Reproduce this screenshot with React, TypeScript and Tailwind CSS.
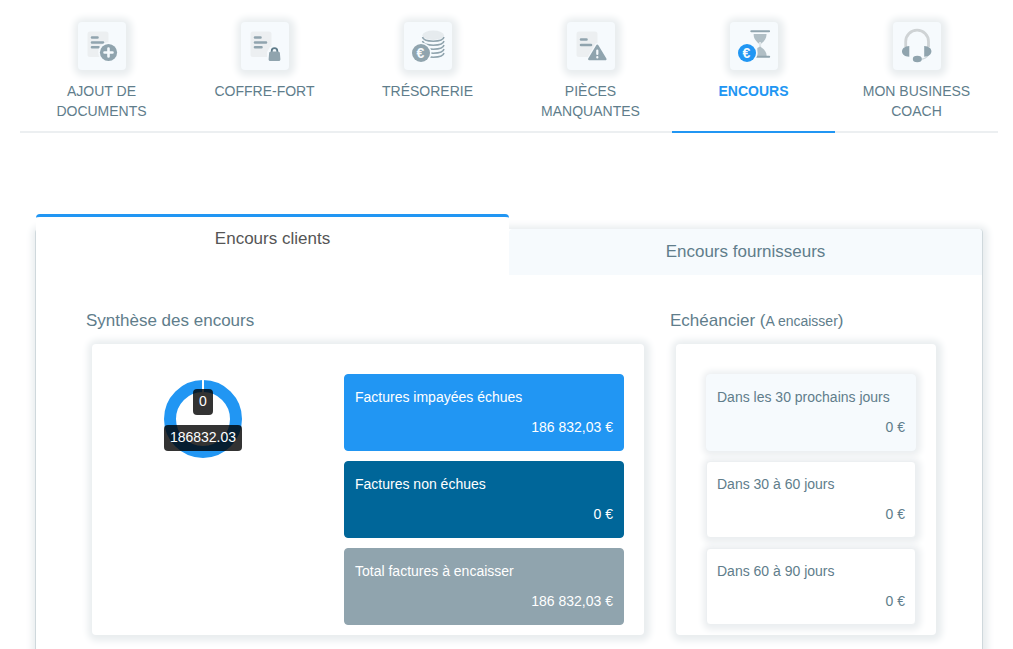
import { useState, type ReactNode } from 'react';
import clsx from 'clsx';

function DocumentLines({ short }: { short?: boolean }) {
  return (
    <>
      <rect x="9.5" y="9.5" width="21" height="25.5" rx="2.5" fill="#eceff1" />
      {short ? (
        <path d="M14 17.5h5.5M14 23h10" stroke="#90a4ae" strokeWidth="2.6" strokeLinecap="round" />
      ) : (
        <path d="M14 15.5h5.5M14 20.5h11M14 25.3h6.5" stroke="#90a4ae" strokeWidth="2.6" strokeLinecap="round" />
      )}
    </>
  );
}

function EuroCoin({ fill }: { fill: string }) {
  return (
    <>
      <circle cx="17" cy="31" r="10.5" fill="#f6fafd" />
      <circle cx="17" cy="31" r="9" fill={fill} />
      <text x="16.5" y="35.7" textAnchor="middle" fontSize="14" fontWeight="bold" fill="#f6fafd">€</text>
    </>
  );
}

const navItems: { label: string; icon: ReactNode }[] = [
  {
    label: 'AJOUT DE DOCUMENTS',
    icon: (
      <>
        <DocumentLines />
        <circle cx="30.5" cy="30.5" r="10.3" fill="#f6fafd" />
        <circle cx="30.5" cy="30.5" r="8.6" fill="#90a4ae" />
        <path d="M30.5 26.5v8M26.5 30.5h8" stroke="#f6fafd" strokeWidth="2.6" strokeLinecap="round" />
      </>
    ),
  },
  {
    label: 'COFFRE-FORT',
    icon: (
      <>
        <DocumentLines />
        <path d="M26 40.5v-10.5l3-5h9l3 5v10.5z" fill="#f6fafd" />
        <path d="M30.7 31v-2a2.8 2.8 0 0 1 5.6 0v2" fill="none" stroke="#607d8b" strokeWidth="1.8" />
        <path d="M30 29.5h7c1.2 0 1.8.8 1.9 1.8l.5 5.9c0 1.1-.6 1.8-1.7 1.8h-8.4c-1.1 0-1.7-.7-1.7-1.8l.5-5.9c.1-1 .7-1.8 1.900-1.800z" fill="#90a4ae" />
      </>
    ),
  },
  {
    label: 'TRÉSORERIE',
    icon: (
      <>
        <ellipse cx="29.2" cy="13.3" rx="10.8" ry="4.7" fill="#e6ebee" />
        <g fill="none" stroke="#90a4ae" strokeWidth="1.5">
          <path d="M18.5 15c1 5.5 20.5 5.5 21.5 0" />
          <path d="M18.5 19c1 5.5 20.5 5.5 21.5 0" />
          <path d="M18.5 23c1 5.5 20.5 5.5 21.5 0" />
          <path d="M18.5 27c1 5.5 20.5 5.5 21.5 0" />
          <path d="M18.5 31c1 5.5 20.5 5.5 21.5 0" />
        </g>
        <EuroCoin fill="#90a4ae" />
      </>
    ),
  },
  {
    label: 'PIÈCES MANQUANTES',
    icon: (
      <>
        <DocumentLines short />
        <path d="M30.3 23.5l8 14h-16z" fill="#f6fafd" stroke="#f6fafd" strokeWidth="5" strokeLinejoin="round" />
        <path d="M30.3 23.8l8 13.3h-16z" fill="#90a4ae" stroke="#90a4ae" strokeWidth="2.5" strokeLinejoin="round" />
        <path d="M30.3 28.5v3.5M30.3 35v.5" stroke="#f6fafd" strokeWidth="2.2" strokeLinecap="round" />
      </>
    ),
  },
  {
    label: 'ENCOURS',
    icon: (
      <>
        <path d="M23.7 12h12.8c.3 4.5-2.5 7-5 9.500h-2.800c-2.500-2.500-5.300-5-5-9.500z" fill="#b0bec5" />
        <path d="M30.1 20v5" stroke="#e0e6e9" strokeWidth="2" />
        <path d="M30.1 24.5c4 2.5 6.5 5.5 6.5 9.5h-9.300v-8z" fill="#b0bec5" />
        <path d="M21.3 9.2h17.8M26 34.7h13.2" stroke="#90a4ae" strokeWidth="2" strokeLinecap="round" />
        <EuroCoin fill="#2196f3" />
      </>
    ),
  },
  {
    label: 'MON BUSINESS COACH',
    icon: (
      <>
        <path d="M12.7 25v-5.5a11.3 11.3 0 0 1 22.8 0V25" fill="none" stroke="#cfd3d5" strokeWidth="2.8" />
        <path d="M35.5 33c-1.5 2.5-4 4-8 4.3" fill="none" stroke="#cfd8dc" strokeWidth="1.3" />
        <path d="M16.3 24v10.8c-9.7-.5-9.700-10.300 0-10.800zM31.200 24v10.800c9.700-.5 9.700-10.300 0-10.800z" fill="#90a4ae" />
        <ellipse cx="24.3" cy="37" rx="4.5" ry="3.2" fill="#90a4ae" />
      </>
    ),
  },
];

const totals = [
  { label: 'Factures impayées échues', amount: '186 832,03 €', color: 'border-[#2196f3] bg-[#2196f3] text-white' },
  { label: 'Factures non échues', amount: '0 €', color: 'border-[#006699] bg-[#006699] text-white' },
  { label: 'Total factures à encaisser', amount: '186 832,03 €', color: 'border-[#90a4ae] bg-[#90a4ae] text-white' },
];

const schedule = [
  { label: 'Dans les 30 prochains jours', amount: '0 €', color: 'border-[#f6fafd] bg-[#f6fafd]' },
  { label: 'Dans 30 à 60 jours', amount: '0 €', color: 'border-[#eceff1] bg-white' },
  { label: 'Dans 60 à 90 jours', amount: '0 €', color: 'border-[#eceff1] bg-white' },
];

const tabs = ['Encours clients', 'Encours fournisseurs'];

function AmountBox({ label, amount, className }: { label: string; amount: string; className?: string }) {
  return (
    <div className={clsx('rounded border px-[10px] pb-[13px] pt-3 text-sm', className)}>
      <p>{label}</p>
      <p className="mt-[10px] text-right">{amount}</p>
    </div>
  );
}

function Donut() {
  return (
    <div className="relative mx-auto mt-[6px] h-[78px] w-[78px]">
      <svg viewBox="0 0 78 78" className="h-full w-full">
        <circle cx="39" cy="39" r="33" fill="none" stroke="#2196f3" strokeWidth="12" />
        <path d="M39 0v13" stroke="#fff" strokeWidth="2" />
      </svg>
      <div className="absolute inset-x-0 top-[9px] flex flex-col items-center gap-[10px] text-sm text-white">
        <span className="rounded bg-black/80 px-[6px] pb-1 pt-[2px]">0</span>
        <span className="rounded bg-black/80 px-[6px] pb-1 pt-[2px]">186832.03</span>
      </div>
    </div>
  );
}

export default function App() {
  const [activeTab, setActiveTab] = useState(0);

  return (
    <div className="h-screen overflow-hidden bg-white font-['Liberation_Sans',Arial,sans-serif] text-[#607d8b]">
      <nav className="ml-5 mr-[15px] grid grid-cols-6">
        {navItems.map((item) => {
          const active = item.label === 'ENCOURS';
          return (
            <a
              key={item.label}
              href="#"
              className={clsx(
                'flex flex-col items-center border-b-2 px-5 pb-[10px] pt-[22px] text-center text-sm',
                active ? 'border-[#2196f3] font-bold text-[#2196f3]' : 'border-[#eceff1]'
              )}
            >
              <svg
                viewBox="0 0 48 48"
                className="mb-[11px] h-12 w-12 rounded bg-[#f6fafd] shadow-[1px_1px_7px_5px_#e9edef]"
              >
                {item.icon}
              </svg>
              {item.label}
            </a>
          );
        })}
      </nav>

      <main className="ml-[35px] mr-[30px] mt-24 rounded-t border-x border-[#cfd8dc] bg-white shadow-[1px_1px_7px_4px_#e9edef]">
        <div className="grid grid-cols-2 items-end" role="tablist">
          {tabs.map((tab, index) => (
            <button
              key={tab}
              role="tab"
              aria-selected={activeTab === index}
              onClick={() => setActiveTab(index)}
              className={clsx(
                'flex justify-center rounded-t text-[17px] leading-6',
                activeTab === index
                  ? '-mt-[15px] h-[61px] border-t-3 border-[#2196f3] bg-white pt-[10px] text-[#555]'
                  : 'h-[46px] bg-[#f6fafd] pt-[11px]'
              )}
            >
              {tab}
            </button>
          ))}
        </div>

        <div className="grid grid-cols-[minmax(0,1fr)_272px] gap-5 pb-12 pl-[50px] pr-10 pt-[34px]">
          <section>
            <h2 className="text-[17px] leading-6">Synthèse des encours</h2>
            <div className="mx-[6px] mt-[11px] flex gap-[30px] rounded pb-[10px] pr-5 pt-[30px] shadow-[1px_1px_7px_5px_#e9edef]">
              <div className="flex-1">
                <Donut />
              </div>
              <div className="flex w-[280px] flex-col gap-[10px]">
                {totals.map((item) => (
                  <AmountBox key={item.label} label={item.label} amount={item.amount} className={item.color} />
                ))}
              </div>
            </div>
          </section>

          <section>
            <h2 className="text-[17px] leading-6">
              Echéancier (<span className="text-sm">A encaisser</span>)
            </h2>
            <div className="mx-[6px] mt-[11px] flex flex-col gap-[10px] rounded pb-[10px] pl-[30px] pr-5 pt-[30px] shadow-[1px_1px_7px_5px_#e9edef]">
              {schedule.map((item) => (
                <AmountBox
                  key={item.label}
                  label={item.label}
                  amount={item.amount}
                  className={clsx('shadow-[1px_1px_6px_4px_#eceff1]', item.color)}
                />
              ))}
            </div>
          </section>
        </div>
      </main>
    </div>
  );
}
